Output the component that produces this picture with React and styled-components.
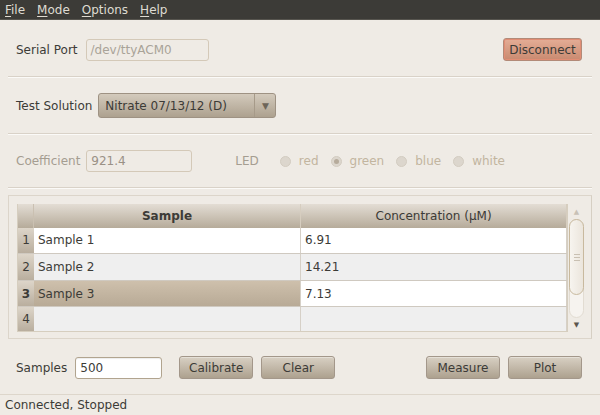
import React from 'react';
import styled, { createGlobalStyle } from 'styled-components';

const GlobalStyle = createGlobalStyle`
  html, body {
    margin: 0;
    padding: 0;
    background: #efebe5;
  }
  body {
    font-family: "DejaVu Sans", "Liberation Sans", sans-serif;
    font-size: 12px;
    color: #3c3b37;
  }
`;

const rows = [
  { n: 1, sample: 'Sample 1', conc: '6.91' },
  { n: 2, sample: 'Sample 2', conc: '14.21' },
  { n: 3, sample: 'Sample 3', conc: '7.13', selected: true },
  { n: 4, sample: '', conc: '' },
];

const leds = [
  { name: 'red' },
  { name: 'green', checked: true },
  { name: 'blue' },
  { name: 'white' },
];

const App = () => {
  return (
    <Window>
      <GlobalStyle />
      <MenuBar>
        <MenuItem><u>F</u>ile</MenuItem>
        <MenuItem><u>M</u>ode</MenuItem>
        <MenuItem><u>O</u>ptions</MenuItem>
        <MenuItem><u>H</u>elp</MenuItem>
      </MenuBar>
      <Body>
        <Row>
          <Label>Serial Port</Label>
          <TextInput $w={123} $disabled>/dev/ttyACM0</TextInput>
          <Spacer />
          <Button $danger $w={79}>Disconnect</Button>
        </Row>
        <Separator />
        <Row>
          <Label>Test Solution</Label>
          <Combo>
            <ComboText>Nitrate 07/13/12 (D)</ComboText>
            <ComboArrow>▼</ComboArrow>
          </Combo>
        </Row>
        <Separator />
        <Row>
          <Label $disabled $gap={6}>Coefficient</Label>
          <TextInput $w={106} $disabled $dim>921.4</TextInput>
          <LedLabel>LED</LedLabel>
          {leds.map(l => (
            <Radio key={l.name}>
              <RadioDot $checked={l.checked} />
              {l.name}
            </Radio>
          ))}
        </Row>
        <Separator />
        <TableFrame>
          <Table>
            <HeadRow>
              <Corner />
              <HeadCell $bold>Sample</HeadCell>
              <HeadCell>Concentration (µM)</HeadCell>
            </HeadRow>
            {rows.map(r => (
              <DataRow key={r.n} $alt={r.n % 2 === 0} $selected={r.selected} $last={r.n === 4}>
                <RowNum $bold={r.selected}>{r.n}</RowNum>
                <Cell>{r.sample}</Cell>
                <Cell $selected={r.selected}>{r.conc}</Cell>
              </DataRow>
            ))}
          </Table>
          <ScrollBar>
            <ScrollArrow>▲</ScrollArrow>
            <ScrollTrack>
              <ScrollThumb>
                <Grip />
                <Grip />
                <Grip />
              </ScrollThumb>
            </ScrollTrack>
            <ScrollArrow $down>▼</ScrollArrow>
          </ScrollBar>
        </TableFrame>
        <BottomRow>
          <Label>Samples</Label>
          <TextInput $w={87}>500</TextInput>
          <ButtonGroup>
            <Button $w={74}>Calibrate</Button>
            <Button $w={74}>Clear</Button>
          </ButtonGroup>
          <Spacer />
          <ButtonGroup>
            <Button $w={74}>Measure</Button>
            <Button $w={74}>Plot</Button>
          </ButtonGroup>
        </BottomRow>
      </Body>
      <StatusBar>Connected, Stopped</StatusBar>
    </Window>
  );
};

export default App;

// Styled Components

const Window = styled.div`
  width: 600px;
  height: 415px;
  display: flex;
  flex-direction: column;
  background: #efebe5;
  overflow: hidden;
`;

const MenuBar = styled.div`
  height: 20px;
  background: #3c3b37;
  border-bottom: 1px solid #57554f;
  box-sizing: border-box;
  display: flex;
  align-items: center;
  padding-left: 5px;
  gap: 12px;
`;

const MenuItem = styled.span`
  color: #dfdbd2;
  font-size: 12px;
  line-height: 20px;
  u {
    text-decoration: underline;
    text-underline-offset: 2px;
  }
`;

const Body = styled.div`
  flex: 1;
  display: flex;
  flex-direction: column;
  padding: 18px 8px 0 8px;
`;

const Row = styled.div`
  display: flex;
  align-items: center;
  min-height: 22px;
  padding: 0 10px 0 8px;
`;

const Label = styled.span`
  color: ${p => p.$disabled ? '#a59d91' : '#3c3b37'};
  margin-right: ${p => p.$gap ?? 8}px;
  white-space: nowrap;
`;

const Spacer = styled.div`
  flex: 1;
`;

const TextInput = styled.div`
  width: ${p => p.$w}px;
  height: 22px;
  box-sizing: border-box;
  border: 1px solid ${p => p.$disabled ? '#d4c9b8' : '#b1a48f'};
  border-radius: 3px;
  background: ${p => p.$disabled ? '#efebe5' : '#ffffff'};
  color: ${p => p.$disabled ? (p.$dim ? '#9a9185' : '#a9a398') : '#3c3b37'};
  padding: 0 4px;
  line-height: 20px;
  box-shadow: ${p => p.$disabled ? 'none' : 'inset 0 1px 1px rgba(0,0,0,0.08)'};
`;

const Button = styled.div`
  width: ${p => p.$w}px;
  height: 23px;
  box-sizing: border-box;
  border-radius: 3px;
  display: flex;
  align-items: center;
  justify-content: center;
  color: #3c3b37;
  border: 1px solid ${p => p.$danger ? '#b28a78' : '#a3978a'};
  background: ${p => p.$danger
    ? 'linear-gradient(#e4ad96, #c98a70)'
    : 'linear-gradient(#d8d0c3, #ada18f)'};
  box-shadow: ${p => p.$danger
    ? 'inset 0 0 0 1px #e18d74'
    : 'inset 0 1px 0 rgba(255,255,255,0.35)'};
`;

const ButtonGroup = styled.div`
  display: flex;
  gap: 8px;
  margin-left: 17px;
`;

const Separator = styled.div`
  height: 2px;
  margin: 15px 0 15px 0;
  border-top: 1px solid #d9d2c8;
  border-bottom: 1px solid #fbfaf8;
  box-sizing: border-box;
`;

const Combo = styled.div`
  width: 178px;
  height: 25px;
  box-sizing: border-box;
  border: 1px solid #9e9283;
  border-radius: 3px;
  background: linear-gradient(#d3cabc, #ada18f);
  display: flex;
  align-items: center;
  margin-left: -2px;
`;

const ComboText = styled.span`
  flex: 1;
  padding-left: 6px;
  color: #3c3b37;
`;

const ComboArrow = styled.span`
  width: 20px;
  height: 100%;
  border-left: 1px solid #a69a89;
  display: flex;
  align-items: center;
  justify-content: center;
  font-size: 9px;
  color: #6d6559;
`;

const LedLabel = styled.span`
  color: #a59d91;
  margin-left: 43px;
  margin-right: 21px;
`;

const Radio = styled.span`
  display: flex;
  align-items: center;
  color: #c2b59f;
  margin-right: 12px;
`;

const RadioDot = styled.span`
  width: 11px;
  height: 11px;
  box-sizing: border-box;
  border-radius: 50%;
  background: #dcd6cd;
  border: 1px solid #d3ccc1;
  margin-right: 8px;
  position: relative;
  &::after {
    content: '';
    display: ${p => p.$checked ? 'block' : 'none'};
    position: absolute;
    left: 2px;
    top: 2px;
    width: 5px;
    height: 5px;
    border-radius: 50%;
    background: #b6ab9b;
  }
`;

const TableFrame = styled.div`
  height: 144px;
  margin-top: -9px;
  box-sizing: border-box;
  border: 1px solid #dcd5ca;
  border-right-color: #d6cfc3;
  background: #efebe5;
  display: flex;
  padding: 8px 6px 6px 8px;
`;

const Table = styled.div`
  width: 551px;
  display: flex;
  flex-direction: column;
  border: 1px solid #d6cebf;
  border-top: none;
`;

const HeadRow = styled.div`
  display: grid;
  grid-template-columns: 16px 267px 1fr;
  height: 24px;
  background: linear-gradient(#e3ddd4, #b6ab9a);
`;

const Corner = styled.div`
  border-right: 1px solid #cac0b1;
`;

const HeadCell = styled.div`
  display: flex;
  align-items: center;
  justify-content: center;
  font-weight: ${p => p.$bold ? 'bold' : 'normal'};
  color: #3c3b37;
  border-right: 1px solid #d6cdbf;
`;

const DataRow = styled.div`
  display: grid;
  grid-template-columns: 16px 267px 1fr;
  height: ${p => p.$last ? 24 : 27}px;
  box-sizing: border-box;
  background: ${p => p.$alt ? '#efefef' : '#ffffff'};
  border-bottom: ${p => p.$last ? 'none' : '1px solid #cfc9c0'};
  ${p => p.$selected && `
    & > div:nth-child(2) { background: linear-gradient(#cec0ac, #b8aa96); }
  `}
`;

const RowNum = styled.div`
  background: linear-gradient(#ddd5c9, #b9ae9e);
  display: flex;
  align-items: center;
  justify-content: center;
  font-weight: ${p => p.$bold ? 'bold' : 'normal'};
  color: #3c3b37;
  font-size: 12px;
`;

const Cell = styled.div`
  display: flex;
  align-items: center;
  padding-left: 4px;
  color: #3c3b37;
  border-right: 1px solid #d6d0c7;
  background: ${p => p.$selected ? '#ffffff' : 'transparent'};
`;

const ScrollBar = styled.div`
  width: 17px;
  display: flex;
  flex-direction: column;
  align-items: center;
`;

const ScrollArrow = styled.div`
  height: 14px;
  font-size: 7px;
  color: ${p => p.$down ? '#5a554d' : '#c8c1b6'};
  display: flex;
  align-items: center;
  justify-content: center;
  margin-top: ${p => p.$down ? '0' : '1px'};
`;

const ScrollTrack = styled.div`
  flex: 1;
  width: 15px;
  border-radius: 8px;
  background: #f6f3ef;
  border: 1px solid #e2dcd2;
  box-sizing: border-box;
  display: flex;
  flex-direction: column;
`;

const ScrollThumb = styled.div`
  height: 74px;
  margin: -1px;
  border-radius: 8px;
  border: 1px solid #c8b99e;
  background: linear-gradient(90deg, #f7f4ef, #ebe5dc);
  display: flex;
  flex-direction: column;
  align-items: center;
  justify-content: center;
  gap: 2px;
`;

const Grip = styled.div`
  width: 6px;
  height: 1px;
  background: #c9c0b2;
`;

const BottomRow = styled.div`
  display: flex;
  align-items: center;
  height: 23px;
  margin-top: 17px;
  padding: 0 10px 0 8px;
`;

const StatusBar = styled.div`
  height: 21px;
  border-top: 1px solid #ddd6cb;
  box-sizing: border-box;
  padding-left: 5px;
  line-height: 20px;
  color: #3c3b37;
`;
